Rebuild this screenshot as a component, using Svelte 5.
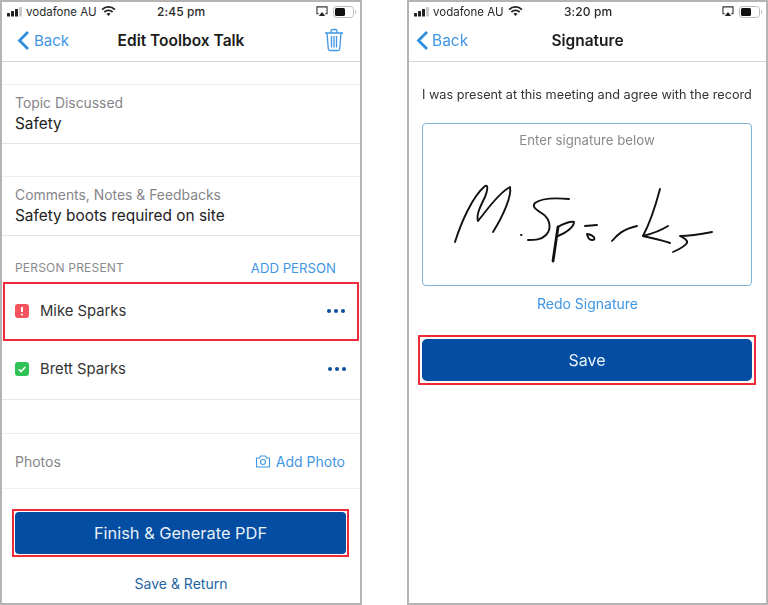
<script>
  const signature = [
    'M455 243 C461 224 472 198 485 187 C489 185 487 193 485 198 C480 208 476 216 478 222 C484 215 498 194 510 188 C512 197 503 217 493 233',
    'M521 236 L521.500 236',
    'M569 200 C558 199 543 198 535 204 C531 208 538 212 543 215 C550 220 552 230 546 236 C541 241 535 241 528 241',
    'M587 235 C594 236 597 241 592 241 C590 241 588 240 587 235',
    'M585 227 L597 226',
    'M558 228 C562 225 571 222 574 223 C574 228 566 234 558 237',
    'M612 242 C617 236 623 230 637 227',
    'M660 190 C656 205 651 222 643 237',
    'M668 227 C660 232 651 235 643 237 C651 239 662 241 670 244',
    'M712 233 C702 235 690 237 680 237 C684 239 688 241 687 244 C684 248 680 250 673 253'
  ];
</script>

{#snippet status(time)}
  <div class="status">
    <svg class="signal" viewBox="0 0 16 10" width="16" height="10" aria-hidden="true">
      <rect x="0" y="6" width="3" height="3.5" rx=".5" fill="#222" />
      <rect x="4" y="4" width="3" height="5.5" rx=".5" fill="#222" />
      <rect x="8" y="2" width="3" height="7.500" rx=".5" fill="#222" />
      <rect x="12" y="0" width="3" height="9.500" rx=".5" fill="#c9c9c9" />
    </svg>
    <span class="carrier">vodafone AU</span>
    <svg class="wifi" viewBox="0 0 16 12" width="15" height="11" aria-hidden="true">
      <path d="M1 4 C5 0 11 0 15 4 M3.500 6.500 C6 4.200 10 4.200 12.500 6.500" fill="none" stroke="#222" stroke-width="2" />
      <path d="M5.700 8.500 C7 7.300 9 7.300 10.300 8.500 L8 11 Z" fill="#222" />
    </svg>
    <span class="time">{time}</span>
    <svg class="airplay" viewBox="0 0 14 12" width="14" height="11" aria-hidden="true">
      <path d="M3.500 8.500 H1.500 V1 H12.500 V8.500 H10.500" fill="none" stroke="#333" stroke-width="1.200" />
      <path d="M3.500 11 L7 6.500 L10.500 11 Z" fill="#222" />
    </svg>
    <svg class="battery" viewBox="0 0 24 12" width="24" height="12" aria-hidden="true">
      <rect x=".5" y=".5" width="20" height="11" rx="3" fill="#fff" stroke="#bbb" />
      <rect x="2" y="2" width="10" height="8" rx="1.500" fill="#111" />
      <path d="M22 4 C23 4.500 23 7.500 22 8" fill="none" stroke="#bbb" />
    </svg>
  </div>
{/snippet}

{#snippet back(tight)}
  <div class="back" class:tight>
    <svg viewBox="0 0 13 21" width="13" height="21" aria-hidden="true">
      <path d="M11 2 L2.500 10.500 L11 19" fill="none" stroke="#2f8de0" stroke-width="2.800" />
    </svg>
    <span>Back</span>
  </div>
{/snippet}

<div class="page">
  <section class="phone">
    {@render status('2:45 pm')}
    <header class="nav">
      {@render back(false)}
      <h1>Edit Toolbox Talk</h1>
      <svg class="trash" viewBox="0 0 20 24" width="20" height="24" aria-hidden="true">
        <path d="M1 5 H19 M7 5 V3 C7 2 8 1.500 9 1.500 H11 C12 1.500 13 2 13 3 V5 M3 5 L4.300 21 C4.400 22 5 22.500 6 22.500 H14 C15 22.500 15.600 22 15.700 21 L17 5 M7.500 8 V19.500 M10 8 V19.500 M12.500 8 V19.500" fill="none" stroke="#3f96e4" stroke-width="1.300" />
      </svg>
    </header>
    <div class="spacer top-gap"></div>
    <div class="field">
      <span class="label">Topic Discussed</span>
      <span class="value">Safety</span>
    </div>
    <div class="spacer mid-gap"></div>
    <div class="field">
      <span class="label">Comments, Notes &amp; Feedbacks</span>
      <span class="value">Safety boots required on site</span>
    </div>
    <div class="section">
      <span>PERSON PRESENT</span>
      <span class="add">ADD PERSON</span>
    </div>
    <div class="person flagged">
      <svg viewBox="0 0 14 14" width="14" height="14" aria-hidden="true">
        <rect width="14" height="14" rx="3" fill="#f4525c" />
        <path d="M7 3 V8" stroke="#fff" stroke-width="2" />
        <circle cx="7" cy="10.500" r="1.100" fill="#fff" />
      </svg>
      <span class="name">Mike Sparks</span>
      <span class="dots"><i></i><i></i><i></i></span>
    </div>
    <div class="person">
      <svg viewBox="0 0 14 14" width="14" height="14" aria-hidden="true">
        <rect width="14" height="14" rx="3" fill="#2fc257" />
        <path d="M3.800 7.300 L6 9.500 L10.300 5" fill="none" stroke="#fff" stroke-width="1.600" />
      </svg>
      <span class="name">Brett Sparks</span>
      <span class="dots"><i></i><i></i><i></i></span>
    </div>
    <div class="spacer list-gap"></div>
    <div class="photos">
      <span>Photos</span>
      <span class="add-photo">
        <svg viewBox="0 0 16 13" width="16" height="13" aria-hidden="true">
          <path d="M1.500 3 H4.500 L5.500 1 H10.500 L11.500 3 H14.500 V12 H1.500 Z" fill="none" stroke="#3f96e4" stroke-width="1.100" stroke-linejoin="round" />
          <circle cx="8" cy="7" r="2.500" fill="none" stroke="#3f96e4" stroke-width="1.100" />
        </svg>
        Add Photo
      </span>
    </div>
    <div class="highlight finish"><button>Finish &amp; Generate PDF</button></div>
    <div class="return">Save &amp; Return</div>
  </section>

  <section class="phone">
    {@render status('3:20 pm')}
    <header class="nav">
      {@render back(true)}
      <h1>Signature</h1>
    </header>
    <p class="agree">I was present at this meeting and agree with the record</p>
    <div class="sign-box">
      <span>Enter signature below</span>
    </div>
    <div class="redo">Redo Signature</div>
    <div class="highlight save"><button>Save</button></div>
    <svg class="signature" viewBox="422 123 330 162" width="330" height="162" aria-hidden="true">
      {#each signature as d}
        <path {d} fill="none" stroke="#111" stroke-width="1.900" stroke-linecap="round" stroke-linejoin="round" />
      {/each}
      <path d="M558 228 L553 262" fill="none" stroke="#111" stroke-width="2.800" stroke-linecap="round" />
    </svg>
  </section>
</div>

<style>
  :global(body) {
    margin: 0;
    background: #fff;
  }

  .page {
    display: flex;
    justify-content: space-between;
    width: 768px;
    height: 605px;
    overflow: hidden;
    font-family: Inter, "Liberation Sans", sans-serif;
    filter: blur(0.35px);
  }

  .phone {
    position: relative;
    box-sizing: border-box;
    width: 362px;
    height: 605px;
    border: 2px solid #b4b4b4;
    background: #fff;
    display: flex;
    flex-direction: column;
  }

  .phone:last-child {
    width: 361px;
  }

  .status {
    height: 19px;
    padding: 0 5px;
    display: flex;
    align-items: center;
    font-size: 12px;
    color: #2a2a2a;
    flex: none;
  }

  .signal { margin-right: 3px; }
  .carrier { width: 71px; white-space: nowrap; font-size: 11.500px; }
  .wifi { margin-left: 4px; }
  .time {
    margin-left: 41px;
    font-weight: 500;
    font-size: 12px;
    letter-spacing: .1px;
  }
  .airplay { margin-left: auto; margin-right: 4px; }
  .battery { margin-right: -2px; }

  .nav {
    position: relative;
    box-sizing: border-box;
    height: 41px;
    flex: none;
    padding-bottom: 2px;
    border-bottom: 1px solid #d6d6d6;
    display: flex;
    align-items: center;
    justify-content: center;
  }

  .nav h1 {
    margin: 0;
    font-size: 15.500px;
    font-weight: 600;
    color: #1b1b1b;
  }

  .back {
    position: absolute;
    left: 15px;
    top: 9px;
    display: flex;
    align-items: center;
    gap: 4px;
    color: #3f96e4;
    font-size: 15px;
  }

  .back.tight {
    left: 7px;
    gap: 3px;
    font-size: 15.500px;
  }

  .trash {
    position: absolute;
    right: 16px;
    top: 7px;
  }

  .spacer { flex: none; border-bottom: 1px solid #eee; box-sizing: border-box; }
  .top-gap { height: 23px; }
  .mid-gap { height: 33px; }
  .list-gap { height: 34px; }

  .field {
    box-sizing: border-box;
    height: 59px;
    flex: none;
    padding: 10px 13px 0;
    display: flex;
    flex-direction: column;
    gap: 3px;
    border-bottom: 1px solid #e4e4e4;
  }

  .label { font-size: 13.900px; line-height: 17px; color: #85858a; }
  .value { font-size: 15.400px; line-height: 18px; color: #222; }

  .section {
    box-sizing: border-box;
    height: 46px;
    flex: none;
    padding: 24px 24px 0 13px;
    display: flex;
    justify-content: space-between;
    align-items: flex-start;
    line-height: 16px;
    font-size: 12px;
    color: #8a8a8e;
    letter-spacing: .2px;
  }

  .add { color: #3f96e4; font-size: 13.200px; letter-spacing: 0; }

  .person {
    box-sizing: border-box;
    height: 59px;
    flex: none;
    padding: 0 14px 3px 13px;
    display: flex;
    align-items: center;
    gap: 11px;
    border-bottom: 1px solid #e8e8e8;
    color: #333;
    font-size: 14.800px;
  }

  .person.flagged {
    margin: 0 1px;
    padding: 0 12px 1px 10px;
    border: 2px solid #ef2b3a;
  }

  .name { flex: 1; }
  .dots { display: flex; gap: 3px; }
  .dots i { width: 4px; height: 4px; border-radius: 50%; background: #0b4f9c; }

  .photos {
    box-sizing: border-box;
    height: 55px;
    flex: none;
    padding: 0 15px 0 13px;
    display: flex;
    justify-content: space-between;
    align-items: center;
    border-bottom: 1px solid #f0f0f0;
    font-size: 14px;
    color: #85858a;
  }

  .add-photo {
    display: flex;
    align-items: center;
    gap: 5px;
    color: #3f96e4;
  }

  .highlight {
    box-sizing: border-box;
    flex: none;
    border: 2px solid #ef2b3a;
    padding: 1px;
    display: flex;
  }

  .highlight button {
    flex: 1;
    border: 0;
    border-radius: 4px;
    background: #034ea2;
    color: #e8f0f8;
    font-family: inherit;
    font-size: 16.400px;
  }

  .finish {
    height: 48px;
    margin: 20px 11px 0 10px;
  }

  .return {
    margin-top: 18px;
    text-align: center;
    font-size: 14px;
    color: #25649f;
  }

  .agree {
    margin: 24px 0 0 13px;
    line-height: 18px;
    font-size: 12.700px;
    color: #333;
    white-space: nowrap;
  }

  .sign-box {
    box-sizing: border-box;
    margin: 19px 14px 0 13px;
    height: 163px;
    flex: none;
    border: 1px solid #7fb4d6;
    border-radius: 4px;
    padding-top: 8px;
    text-align: center;
    font-size: 13.200px;
    color: #8a8a8e;
  }

  .redo {
    margin-top: 9px;
    text-align: center;
    line-height: 18px;
    font-size: 14px;
    color: #3f96e4;
  }

  .save {
    height: 50px;
    margin: 22px 10px 0 9px;
    padding: 2px;
  }

  .save button { border-radius: 5px; padding-bottom: 2px; font-size: 16px; }

  .signature {
    position: absolute;
    left: 13px;
    top: 120px;
  }
</style>
